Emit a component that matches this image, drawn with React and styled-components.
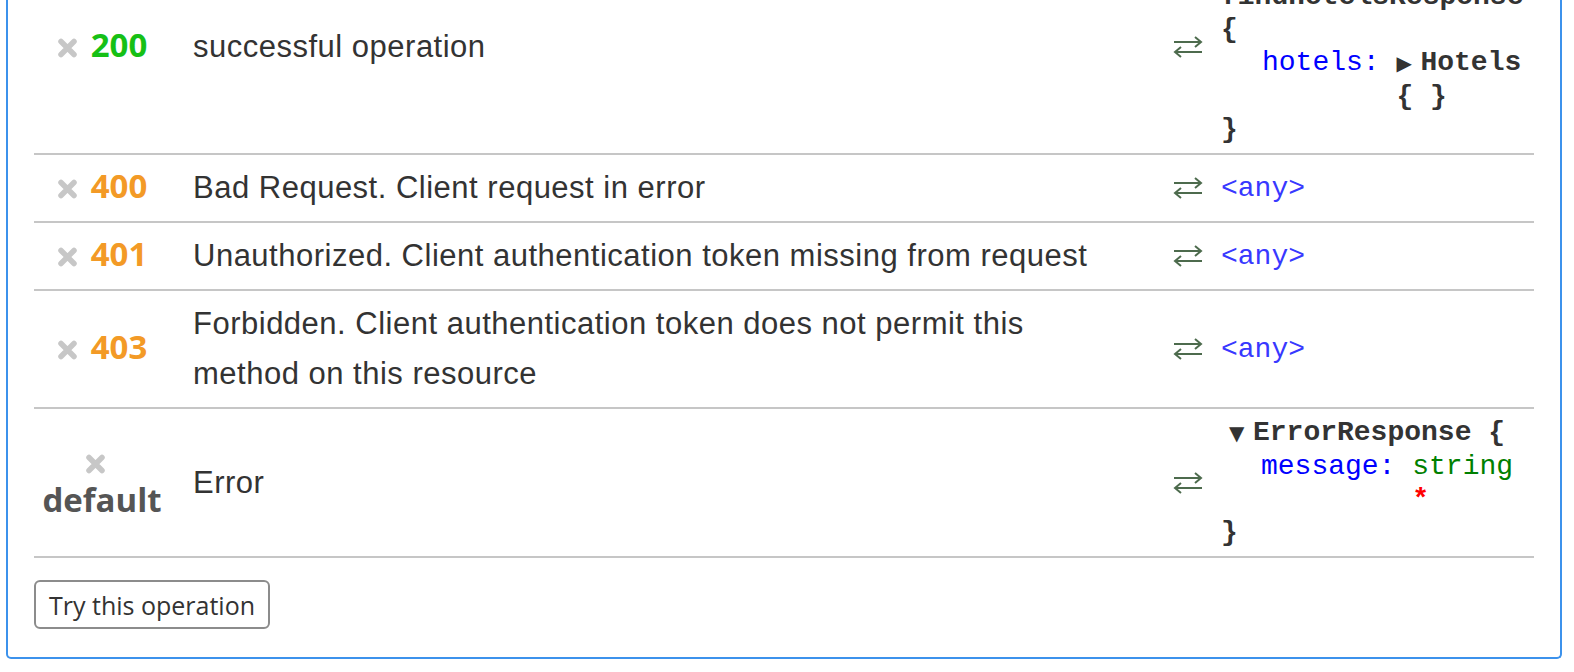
import React from 'react';
import styled, { createGlobalStyle } from 'styled-components';

const GlobalStyle = createGlobalStyle`
  html, body {
    margin: 0;
    padding: 0;
    background: #fff;
    overflow: hidden;
  }
  body {
    font-family: "Liberation Sans", Arial, sans-serif;
    color: #333;
  }
`;

const Panel = styled.section`
  margin: -60px 0 0 6px;
  width: 1556px;
  box-sizing: border-box;
  border: 2px solid #3c92ec;
  border-top: none;
  border-radius: 0 0 5px 5px;
  padding: 0 26px 28px;
`;

const Row = styled.div`
  display: grid;
  grid-template-columns: 136px 957px 94px 1fr;
  align-items: center;
  border-bottom: 2px solid #c6c6c6;
  padding: ${(p) => (p.$model ? '7px' : '8px')} 0;
`;

const Code = styled.div`
  text-align: center;
  font-family: "Open Sans", sans-serif;
  font-weight: 700;
  font-size: 33px;
  line-height: 39px;
  padding-bottom: 5px;
  color: ${(p) => p.$color};
`;

const XIcon = styled.svg`
  width: 21px;
  height: 20px;
  margin-right: 13px;
  vertical-align: -1px;
`;

const Desc = styled.div`
  padding-left: 23px;
  padding-right: 7px;
  font-size: 31px;
  letter-spacing: 0.5px;
  line-height: 50px;
  color: #333;
`;

const Arrow = styled.svg`
  justify-self: end;
  margin-right: 18px;
  width: 30px;
  height: 22px;
`;

const Mono = styled.div`
  font-family: "Liberation Mono", "Courier New", monospace;
  font-size: 28px;
  line-height: 33px;
  color: #333;
`;

const Any = styled.span`
  color: #3838ff;
`;

const Name = styled.span`
  font-weight: 700;
  color: #333;
`;

const Line = styled.div`
  display: flex;
  align-items: baseline;
  padding-left: ${(p) => p.$indent || 0}px;
`;

const Prop = styled.span`
  color: #0000ff;
  margin-right: 0.6em;
`;

const Type = styled.span`
  color: #008000;
`;

const Req = styled.span`
  color: #ff0000;
  font-weight: 700;
`;

const Toggle = styled.span`
  display: inline-block;
  width: 24px;
  font-family: "DejaVu Sans", sans-serif;
  font-size: 20px;
  color: #333;
`;

const Nested = styled.div`
  display: flex;
  flex-direction: column;
`;

const Footer = styled.div`
  padding-top: 22px;
`;

const Button = styled.button`
  font-family: "Open Sans", sans-serif;
  font-size: 25px;
  color: #333;
  background: #fff;
  border: 2px solid #8c8c8c;
  border-radius: 6px;
  height: 49px;
  padding: 0 13px;
  line-height: 44px;
`;

function Cross() {
  return (
    <XIcon viewBox="0 0 21 20">
      <path d="M4 3.5 L17 16.5 M17 3.5 L4 16.5" stroke="#c7c7c7" strokeWidth="5.5" strokeLinecap="round" />
    </XIcon>
  );
}

function SwapArrows() {
  return (
    <Arrow viewBox="0 0 30 22">
      <g stroke="#4d6b4d" strokeWidth="2" fill="none">
        <path d="M1 6 H28 M22 1 L28 6 L22 11" />
        <path d="M29 16 H2 M8 11 L2 16 L8 21" />
      </g>
    </Arrow>
  );
}

const responses = [
  { code: '400', color: '#f39a26', text: 'Bad Request. Client request in error' },
  { code: '401', color: '#f39a26', text: 'Unauthorized. Client authentication token missing from request' },
  { code: '403', color: '#f39a26', text: 'Forbidden. Client authentication token does not permit this method on this resource' },
];

export default function App() {
  return (
    <>
      <GlobalStyle />
      <Panel>
        <Row $model>
          <Code $color="#16c016"><Cross />200</Code>
          <Desc>successful operation</Desc>
          <SwapArrows />
          <Mono>
            <Line><Toggle>▼</Toggle></Line>
            <Line><Name>findHotelsResponse</Name></Line>
            <Line><Name>{'{'}</Name></Line>
            <Line $indent={41}>
              <Prop>hotels:</Prop>
              <Nested>
                <span><Toggle>▶</Toggle><Name>Hotels</Name></span>
                <Name>{'{ }'}</Name>
              </Nested>
            </Line>
            <Line><Name>{'}'}</Name></Line>
          </Mono>
        </Row>
        {responses.map((r) => (
          <Row key={r.code}>
            <Code $color={r.color}><Cross />{r.code}</Code>
            <Desc>{r.text}</Desc>
            <SwapArrows />
            <Mono><Any>&lt;any&gt;</Any></Mono>
          </Row>
        ))}
        <Row $model>
          <Code $color="#555"><Cross /> default</Code>
          <Desc>Error</Desc>
          <SwapArrows />
          <Mono>
            <Line $indent={8}><Toggle>▼</Toggle><Name>ErrorResponse {'{'}</Name></Line>
            <Line $indent={40}>
              <Prop>message:</Prop>
              <Nested>
                <Type>string</Type>
                <Req>*</Req>
              </Nested>
            </Line>
            <Line><Name>{'}'}</Name></Line>
          </Mono>
        </Row>
        <Footer>
          <Button>Try this operation</Button>
        </Footer>
      </Panel>
    </>
  );
}
